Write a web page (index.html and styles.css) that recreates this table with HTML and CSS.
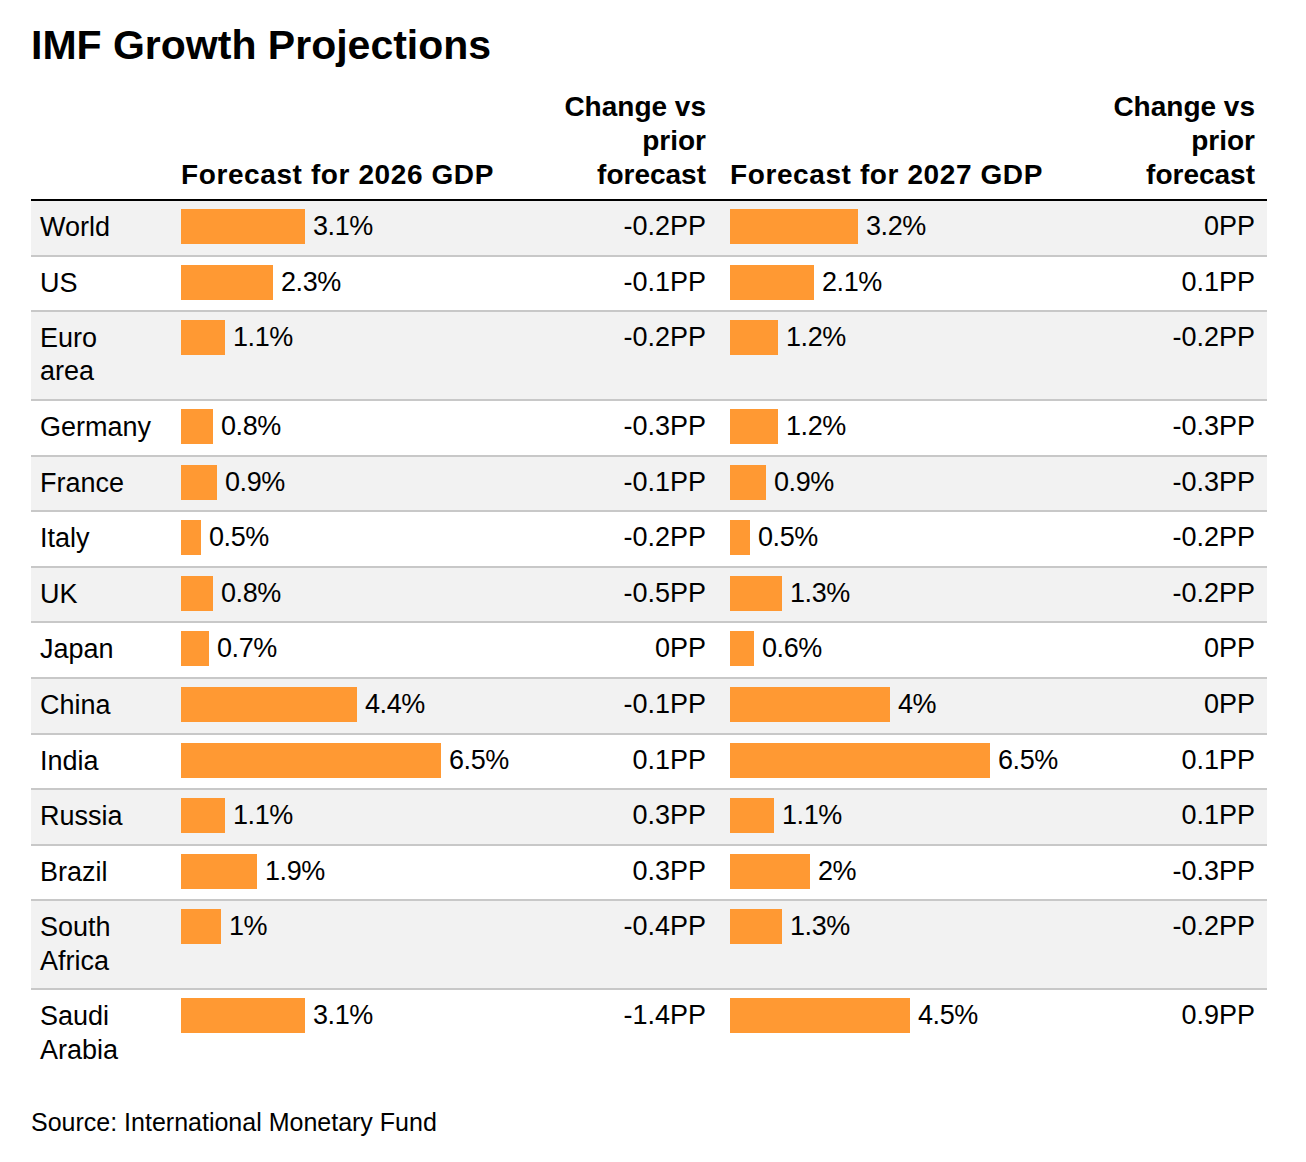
FILE: index.html
```html
<!DOCTYPE html>
<html lang="en">
<head>
<meta charset="utf-8">
<title>IMF Growth Projections</title>
<link rel="stylesheet" href="styles.css">
</head>
<body>
<div class="page">
  <h1 class="title">IMF Growth Projections</h1>
  <div class="table">
    <div class="row head">
      <div class="cell label"></div>
      <div class="cell bar-col">Forecast for 2026 GDP</div>
      <div class="cell change">Change vs prior forecast</div>
      <div class="cell bar-col second">Forecast for 2027 GDP</div>
      <div class="cell change">Change vs prior forecast</div>
    </div>

    <div class="row">
      <div class="cell label">World</div>
      <div class="cell bar-col"><span class="bar" style="width:124px"></span><span class="val">3.1%</span></div>
      <div class="cell change">-0.2PP</div>
      <div class="cell bar-col second"><span class="bar" style="width:128px"></span><span class="val">3.2%</span></div>
      <div class="cell change">0PP</div>
    </div>
    <div class="row">
      <div class="cell label">US</div>
      <div class="cell bar-col"><span class="bar" style="width:92px"></span><span class="val">2.3%</span></div>
      <div class="cell change">-0.1PP</div>
      <div class="cell bar-col second"><span class="bar" style="width:84px"></span><span class="val">2.1%</span></div>
      <div class="cell change">0.1PP</div>
    </div>
    <div class="row">
      <div class="cell label">Euro<br>area</div>
      <div class="cell bar-col"><span class="bar" style="width:44px"></span><span class="val">1.1%</span></div>
      <div class="cell change">-0.2PP</div>
      <div class="cell bar-col second"><span class="bar" style="width:48px"></span><span class="val">1.2%</span></div>
      <div class="cell change">-0.2PP</div>
    </div>
    <div class="row">
      <div class="cell label">Germany</div>
      <div class="cell bar-col"><span class="bar" style="width:32px"></span><span class="val">0.8%</span></div>
      <div class="cell change">-0.3PP</div>
      <div class="cell bar-col second"><span class="bar" style="width:48px"></span><span class="val">1.2%</span></div>
      <div class="cell change">-0.3PP</div>
    </div>
    <div class="row">
      <div class="cell label">France</div>
      <div class="cell bar-col"><span class="bar" style="width:36px"></span><span class="val">0.9%</span></div>
      <div class="cell change">-0.1PP</div>
      <div class="cell bar-col second"><span class="bar" style="width:36px"></span><span class="val">0.9%</span></div>
      <div class="cell change">-0.3PP</div>
    </div>
    <div class="row">
      <div class="cell label">Italy</div>
      <div class="cell bar-col"><span class="bar" style="width:20px"></span><span class="val">0.5%</span></div>
      <div class="cell change">-0.2PP</div>
      <div class="cell bar-col second"><span class="bar" style="width:20px"></span><span class="val">0.5%</span></div>
      <div class="cell change">-0.2PP</div>
    </div>
    <div class="row">
      <div class="cell label">UK</div>
      <div class="cell bar-col"><span class="bar" style="width:32px"></span><span class="val">0.8%</span></div>
      <div class="cell change">-0.5PP</div>
      <div class="cell bar-col second"><span class="bar" style="width:52px"></span><span class="val">1.3%</span></div>
      <div class="cell change">-0.2PP</div>
    </div>
    <div class="row">
      <div class="cell label">Japan</div>
      <div class="cell bar-col"><span class="bar" style="width:28px"></span><span class="val">0.7%</span></div>
      <div class="cell change">0PP</div>
      <div class="cell bar-col second"><span class="bar" style="width:24px"></span><span class="val">0.6%</span></div>
      <div class="cell change">0PP</div>
    </div>
    <div class="row">
      <div class="cell label">China</div>
      <div class="cell bar-col"><span class="bar" style="width:176px"></span><span class="val">4.4%</span></div>
      <div class="cell change">-0.1PP</div>
      <div class="cell bar-col second"><span class="bar" style="width:160px"></span><span class="val">4%</span></div>
      <div class="cell change">0PP</div>
    </div>
    <div class="row">
      <div class="cell label">India</div>
      <div class="cell bar-col"><span class="bar" style="width:260px"></span><span class="val">6.5%</span></div>
      <div class="cell change">0.1PP</div>
      <div class="cell bar-col second"><span class="bar" style="width:260px"></span><span class="val">6.5%</span></div>
      <div class="cell change">0.1PP</div>
    </div>
    <div class="row">
      <div class="cell label">Russia</div>
      <div class="cell bar-col"><span class="bar" style="width:44px"></span><span class="val">1.1%</span></div>
      <div class="cell change">0.3PP</div>
      <div class="cell bar-col second"><span class="bar" style="width:44px"></span><span class="val">1.1%</span></div>
      <div class="cell change">0.1PP</div>
    </div>
    <div class="row">
      <div class="cell label">Brazil</div>
      <div class="cell bar-col"><span class="bar" style="width:76px"></span><span class="val">1.9%</span></div>
      <div class="cell change">0.3PP</div>
      <div class="cell bar-col second"><span class="bar" style="width:80px"></span><span class="val">2%</span></div>
      <div class="cell change">-0.3PP</div>
    </div>
    <div class="row">
      <div class="cell label">South<br>Africa</div>
      <div class="cell bar-col"><span class="bar" style="width:40px"></span><span class="val">1%</span></div>
      <div class="cell change">-0.4PP</div>
      <div class="cell bar-col second"><span class="bar" style="width:52px"></span><span class="val">1.3%</span></div>
      <div class="cell change">-0.2PP</div>
    </div>
    <div class="row">
      <div class="cell label">Saudi<br>Arabia</div>
      <div class="cell bar-col"><span class="bar" style="width:124px"></span><span class="val">3.1%</span></div>
      <div class="cell change">-1.4PP</div>
      <div class="cell bar-col second"><span class="bar" style="width:180px"></span><span class="val">4.5%</span></div>
      <div class="cell change">0.9PP</div>
    </div>
  </div>
  <p class="source">Source: International Monetary Fund</p>
</div>
</body>
</html>
```

FILE: styles.css
```css
html, body {
  margin: 0;
  padding: 0;
  background: #ffffff;
}

body {
  font-family: "Liberation Sans", Arial, sans-serif;
  color: #000000;
}

.page {
  padding: 21px 0 0 31px;
}

.title {
  margin: 0;
  font-size: 41px;
  line-height: 48px;
  font-weight: 700;
}

.table {
  margin-top: 21px;
  width: 1236px;
}

.row {
  display: grid;
  grid-template-columns: 150px 367px 170px 379px 170px;
  border-bottom: 2px solid #c8c8c8;
  font-size: 27px;
}

.row:nth-child(even) {
  background: #f2f2f2;
}

.row:last-child {
  border-bottom: none;
}

.row.head {
  border-bottom: 2px solid #000000;
  align-items: end;
  font-size: 28px;
  font-weight: 700;
  line-height: 34px;
  padding-bottom: 7px;
  background: transparent;
}

.row.head .cell {
  padding-top: 0;
  padding-bottom: 0;
}

.cell.label {
  padding: 10px 0 10.25px 9px;
  line-height: 33.33px;
}

.row.head .cell.label {
  padding: 0;
}

.cell.bar-col {
  padding-top: 8px;
  display: flex;
  align-items: flex-start;
}

.row.head .cell.bar-col {
  display: block;
  letter-spacing: 0.6px;
}

.cell.bar-col.second {
  padding-left: 12px;
}

.bar {
  display: block;
  height: 35px;
  background: #ff9933;
  flex: none;
}

.val {
  margin-left: 8px;
  line-height: 35px;
  letter-spacing: -0.4px;
}

.cell.change {
  padding-top: 8px;
  padding-right: 12px;
  line-height: 35px;
  text-align: right;
}

.row.head .cell.change {
  line-height: 34px;
}

.source {
  margin: 30px 0 0 0;
  font-size: 25px;
  line-height: 30px;
}
```
